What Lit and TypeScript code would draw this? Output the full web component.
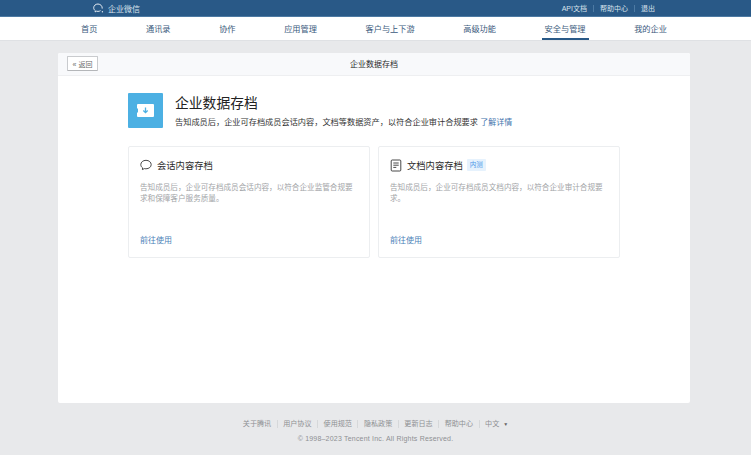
import { LitElement, html, css } from "lit";
import { customElement } from "lit/decorators.js";

const NAV = ["首页", "通讯录", "协作", "应用管理", "客户与上下游", "高级功能", "安全与管理", "我的企业"];
const FOOT = ["关于腾讯", "用户协议", "使用规范", "隐私政策", "更新日志", "帮助中心"];

@customElement("app-root")
export class AppRoot extends LitElement {
  static styles = css`
    :host {
      display: flex;
      flex-direction: column;
      width: 751px;
      height: 455px;
      overflow: hidden;
      background: #e8e9eb;
      font-family: "Liberation Sans", "Noto Sans CJK SC", sans-serif;
      color: #2b2b2b;
    }
    .top {
      height: 17px;
      flex: none;
      box-sizing: border-box;
      background: #295987;
      border-bottom: 1px solid #4d7aa3;
      display: flex;
      align-items: center;
      padding: 0 96px 0 93px;
      color: #d8e2ec;
      font-size: 7.5px;
    }
    .brand {
      display: flex;
      align-items: center;
      gap: 4px;
      font-size: 8px;
      flex: 1;
    }
    .top-links {
      display: flex;
      align-items: center;
      gap: 6px;
      font-size: 7px;
    }
    .top-sep {
      width: 1px;
      height: 7px;
      background: #4d7aa3;
    }
    .nav {
      height: 24px;
      flex: none;
      box-sizing: border-box;
      background: #fff;
      border-bottom: 1px solid #dfe1e4;
      display: flex;
      gap: 48.6px;
      padding-left: 81px;
      font-size: 8.2px;
      color: #3a5a7c;
    }
    .nav-item {
      position: relative;
      display: flex;
      align-items: center;
      height: 24px;
      padding-bottom: 2px;
      box-sizing: border-box;
      white-space: nowrap;
    }
    .nav-item.on::after {
      content: "";
      position: absolute;
      left: -3px;
      right: -3px;
      bottom: 1px;
      height: 2px;
      background: #295987;
    }
    .panel {
      margin: 12px 61px 0 58px;
      height: 350px;
      flex: none;
      background: #fff;
      border-radius: 2px;
      display: flex;
      flex-direction: column;
    }
    .panel-head {
      height: 23px;
      flex: none;
      box-sizing: border-box;
      background: #f8f9fb;
      border-bottom: 1px solid #eeeff1;
      border-radius: 2px 2px 0 0;
      display: grid;
      grid-template-columns: 1fr auto 1fr;
      align-items: center;
      padding: 0 9px 1px;
      font-size: 8px;
    }
    .back {
      justify-self: start;
      box-sizing: border-box;
      width: 31px;
      height: 15px;
      background: #fff;
      border: 1px solid #c9cbce;
      border-bottom-color: #b4b6b9;
      border-radius: 1px;
      font-size: 7px;
      color: #6a6a6a;
      display: flex;
      align-items: center;
      justify-content: center;
      white-space: nowrap;
    }
    .body {
      padding: 17px 70px 0;
    }
    .intro {
      display: flex;
      gap: 12px;
      height: 35px;
    }
    .logo {
      width: 35px;
      height: 35px;
      flex: none;
      border-radius: 1px;
      background: #4cb0e3;
      display: flex;
      align-items: center;
      justify-content: center;
    }
    .intro-text {
      padding-top: 2px;
      white-space: nowrap;
    }
    .intro-title {
      font-size: 13.8px;
      line-height: 18px;
      color: #222;
    }
    .intro-sub {
      font-size: 8.2px;
      line-height: 12px;
      margin-top: 4px;
      color: #333;
    }
    .link {
      color: #3f74ad;
      font-size: 8px;
    }
    .cards {
      display: flex;
      gap: 8.5px;
      margin-top: 18px;
    }
    .card {
      box-sizing: border-box;
      width: 241.5px;
      height: 111.5px;
      border: 1px solid #eceef0;
      border-radius: 2px;
      padding: 11px 11px 0;
      display: flex;
      flex-direction: column;
    }
    .card-title {
      display: flex;
      align-items: center;
      gap: 5px;
      height: 14px;
      font-size: 9.3px;
      color: #2b2b2b;
      white-space: nowrap;
    }
    .tag {
      background: #e6f2fd;
      color: #4c97e8;
      font-size: 6.5px;
      line-height: 12px;
      padding: 0 3px;
      border-radius: 1px;
      margin-left: -1px;
    }
    .desc {
      margin-top: 9.5px;
      font-size: 7.6px;
      line-height: 11px;
      color: #a2a4a7;
      height: 43px;
    }
    .go {
      margin-top: 10px;
      font-size: 8px;
      line-height: 12px;
      color: #4a80b8;
    }
    .foot {
      margin-top: 15px;
      display: flex;
      flex-direction: column;
      align-items: center;
      color: #8e9093;
      font-size: 7.1px;
    }
    .foot-links {
      display: flex;
      align-items: center;
      gap: 5.5px;
      line-height: 12px;
      white-space: nowrap;
    }
    .foot-sep {
      width: 1px;
      height: 8px;
      background: #d6d8da;
    }
    .arrow {
      font-size: 5px;
      margin-left: 4px;
      color: #666;
    }
    .copy {
      margin-top: 3px;
      line-height: 11px;
      font-size: 7px;
      letter-spacing: 0.2px;
    }
    svg {
      display: block;
      flex: none;
    }
  `;

  render() {
    return html`
      <div class="top">
        <div class="brand">
          <svg width="11" height="11" viewBox="0 0 11 11" fill="none" stroke="#e4ebf2" stroke-width="1">
            <path d="M5 1C2.5 1 .7 2.7.7 4.800c0 1.200.6 2.200 1.600 2.900l-.2 1.200 1.400-.7c.5.1 1 .2 1.500.2 1 0 1.800-.3 2.500-.8" />
            <path d="M9.200 5.600C9.500 3 7.600 1.200 5 1" />
            <circle cx="9.400" cy="8.800" r=".7" fill="#e4ebf2" stroke="none" />
          </svg>
          <span>企业微信</span>
        </div>
        <div class="top-links">
          <span>API文档</span><i class="top-sep"></i><span>帮助中心</span><i class="top-sep"></i><span>退出</span>
        </div>
      </div>
      <div class="nav">
        ${NAV.map((n) => html`<div class="nav-item ${n === "安全与管理" ? "on" : ""}">${n}</div>`)}
      </div>
      <div class="panel">
        <div class="panel-head">
          <div class="back">« 返回</div>
          <div>企业数据存档</div>
          <div></div>
        </div>
        <div class="body">
          <div class="intro">
            <div class="logo">
              <svg width="19" height="15" viewBox="0 0 19 15">
                <path fill="#fff" d="M2 1h15a1 1 0 0 1 1 1v11a1 1 0 0 1-1 1H2a1 1 0 0 1-1-1V9.500h1V5.500H1V2a1 1 0 0 1 1-1z" />
                <path fill="none" stroke="#4cb0e3" stroke-width="1.300" d="M9.500 4.500v5M7.300 7.500l2.200 2.200 2.200-2.200" />
              </svg>
            </div>
            <div class="intro-text">
              <div class="intro-title">企业数据存档</div>
              <div class="intro-sub">告知成员后，企业可存档成员会话内容，文档等数据资产，以符合企业审计合规要求 <span class="link">了解详情</span></div>
            </div>
          </div>
          <div class="cards">
            <div class="card">
              <div class="card-title">
                <svg width="12" height="12" viewBox="0 0 12 12" fill="none" stroke="#333" stroke-width=".9">
                  <path d="M6 1.300C3 1.300.8 3.200.8 5.600c0 1.300.7 2.500 1.800 3.300l-.2 1.700 1.900-1c.5.100 1 .2 1.700.2 3 0 5.200-1.900 5.200-4.200S9 1.300 6 1.300z" />
                </svg>
                <span>会话内容存档</span>
              </div>
              <div class="desc">告知成员后，企业可存档成员会话内容，以符合企业监管合规要求和保障客户服务质量。</div>
              <div class="go">前往使用</div>
            </div>
            <div class="card">
              <div class="card-title">
                <svg width="12" height="13" viewBox="0 0 12 13" fill="none" stroke="#333" stroke-width=".9">
                  <rect x="1.200" y="1" width="9.600" height="11" rx="1" />
                  <path d="M3.300 4h5.400M3.300 6.200h5.400M3.300 8.400h3" />
                </svg>
                <span>文档内容存档</span>
                <span class="tag">内测</span>
              </div>
              <div class="desc">告知成员后，企业可存档成员文档内容，以符合企业审计合规要求。</div>
              <div class="go">前往使用</div>
            </div>
          </div>
        </div>
      </div>
      <div class="foot">
        <div class="foot-links">
          ${FOOT.map((f) => html`<span>${f}</span><i class="foot-sep"></i>`)}
          <span>中文<span class="arrow">▼</span></span>
        </div>
        <div class="copy">© 1998–2023 Tencent Inc. All Rights Reserved.</div>
      </div>
    `;
  }
}
